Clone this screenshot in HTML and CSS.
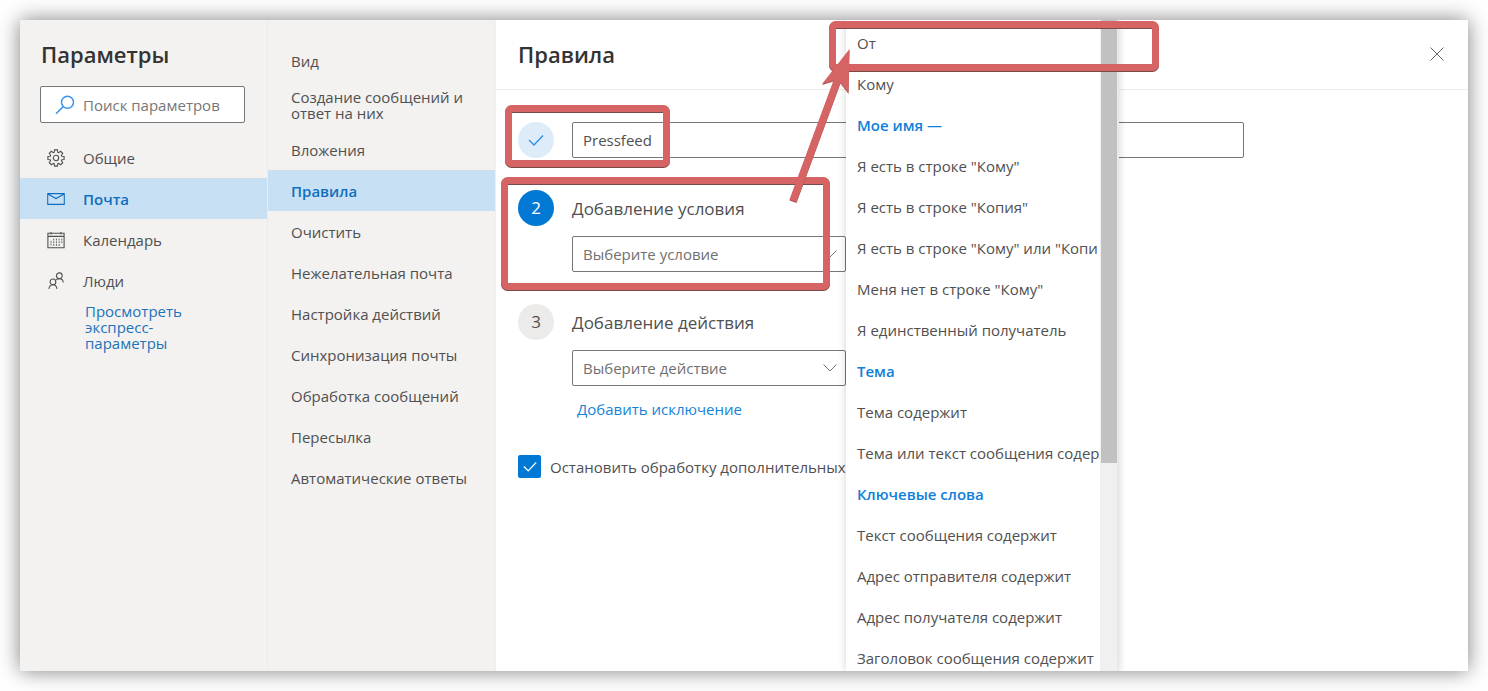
FILE: index.html
```html
<!DOCTYPE html>
<html lang="ru">
<head>
<meta charset="utf-8">
<title>Параметры — Правила</title>
<meta name="viewport" content="width=device-width, initial-scale=1">
<link rel="stylesheet" href="styles.css">
</head>
<body>
<div class="window">
  <aside class="sidebar">
    <h1 class="heading">Параметры</h1>
    <label class="search">
      <svg class="search-icon" viewBox="0 0 20 20" aria-hidden="true"><circle cx="12.5" cy="7.2" r="6"/><path d="M8.2 11.6 1 18.8"/></svg>
      <input class="search-input" type="text" placeholder="Поиск параметров" aria-label="Поиск параметров">
    </label>
    <nav class="sections">
      <a class="section" href="#general">
        <svg class="icon" viewBox="0 0 20 20" aria-hidden="true"><circle cx="10" cy="10" r="3"/><path d="M8.400 1h3.200l.4 2.600 1 .4 2.200-1.500 2.300 2.300L16 7l.4 1 2.600.4v3.200l-2.600.4-.4 1 1.500 2.200-2.300 2.300L13 16l-1 .4-.4 2.600H8.400L8 16.400 7 16l-2.200 1.500-2.300-2.300L4 13l-.4-1-2.600-.4V8.400L3.600 8 4 7 2.500 4.800l2.300-2.300L7 4l1-.4z"/></svg>
        Общие</a>
      <a class="section selected" href="#mail" aria-current="true">
        <svg class="icon" viewBox="0 0 20 20" aria-hidden="true"><path d="M.8 4h18.400v12H.8zM1 4.500l9 5L19 4.500"/></svg>
        Почта</a>
      <a class="section" href="#calendar">
        <svg class="icon" viewBox="0 0 20 20" aria-hidden="true"><path d="M1 2.500h18v16.200H1zM1 6h18M4.500 1v3M15.500 1v3"/><path class="fine" d="M4.500 11v6M7.500 8.500v8M10.500 8.500v8M13.500 8.500v8M16.500 8.500v5"/></svg>
        Календарь</a>
      <a class="section" href="#people">
        <svg class="icon" viewBox="0 0 20 20" aria-hidden="true"><circle cx="6.600" cy="11" r="3.200"/><path d="M2.200 18.800c.3-3 2-4.600 4.400-4.600s4.100 1.600 4.400 4.600"/><circle cx="13.700" cy="4.200" r="3.200"/><path d="M10.200 8.900c.8-1 2-1.500 3.500-1.500 2.400 0 4.100 1.600 4.400 4.200"/></svg>
        Люди</a>
    </nav>
    <a class="quick" href="#quick">Просмотреть экспресс-параметры</a>
  </aside>

  <nav class="pages">
    <a class="page" href="#view">Вид</a>
    <a class="page" href="#compose">Создание сообщений и ответ на них</a>
    <a class="page" href="#attachments">Вложения</a>
    <a class="page selected" href="#rules" aria-current="page">Правила</a>
    <a class="page" href="#sweep">Очистить</a>
    <a class="page" href="#junk">Нежелательная почта</a>
    <a class="page" href="#actions">Настройка действий</a>
    <a class="page" href="#sync">Синхронизация почты</a>
    <a class="page" href="#handling">Обработка сообщений</a>
    <a class="page" href="#forwarding">Пересылка</a>
    <a class="page" href="#replies">Автоматические ответы</a>
  </nav>

  <main class="main">
    <header class="main-header">
      <h2 class="heading">Правила</h2>
      <button class="close" type="button" aria-label="Закрыть">
        <svg class="close-icon" viewBox="0 0 14 14" aria-hidden="true"><path d="M.5.5l13 13M13.500.5l-13 13"/></svg>
      </button>
    </header>
    <form class="steps">
      <div class="step">
        <span class="badge done"><svg class="tick" viewBox="0 0 16 12" aria-hidden="true"><path d="M1 6l5 5 9-9.500"/></svg></span>
        <input class="field" type="text" value="Pressfeed" aria-label="Имя правила">
      </div>
      <div class="step">
        <span class="badge current">2</span>
        <div class="step-body">
          <label class="step-title" for="condition">Добавление условия</label>
          <div class="picker">
            <select class="field" id="condition"><option>Выберите условие</option></select>
            <svg class="chevron" viewBox="0 0 14 8" aria-hidden="true"><path d="M.5.5 7 7l6.500-6.500"/></svg>
          </div>
        </div>
      </div>
      <div class="step">
        <span class="badge">3</span>
        <div class="step-body">
          <label class="step-title" for="action">Добавление действия</label>
          <div class="picker">
            <select class="field" id="action"><option>Выберите действие</option></select>
            <svg class="chevron" viewBox="0 0 14 8" aria-hidden="true"><path d="M.5.5 7 7l6.500-6.500"/></svg>
          </div>
          <a class="exception" href="#exception">Добавить исключение</a>
        </div>
      </div>
      <label class="stop">
        <input class="stop-box" type="checkbox" checked>
        <svg class="stop-tick" viewBox="0 0 16 12" aria-hidden="true"><path d="M1 6l5 5 9-9.500"/></svg>
        <span>Остановить обработку дополнительных</span>
      </label>
    </form>

    <div class="menu">
      <div class="options" role="listbox" aria-label="Условия">
        <div class="option" role="option">От</div>
        <div class="option" role="option">Кому</div>
        <div class="option group" role="presentation">Мое имя —</div>
        <div class="option" role="option">Я есть в строке "Кому"</div>
        <div class="option" role="option">Я есть в строке "Копия"</div>
        <div class="option" role="option">Я есть в строке "Кому" или "Копи</div>
        <div class="option" role="option">Меня нет в строке "Кому"</div>
        <div class="option" role="option">Я единственный получатель</div>
        <div class="option group" role="presentation">Тема</div>
        <div class="option" role="option">Тема содержит</div>
        <div class="option" role="option">Тема или текст сообщения содерж</div>
        <div class="option group" role="presentation">Ключевые слова</div>
        <div class="option" role="option">Текст сообщения содержит</div>
        <div class="option" role="option">Адрес отправителя содержит</div>
        <div class="option" role="option">Адрес получателя содержит</div>
        <div class="option" role="option">Заголовок сообщения содержит</div>
      </div>
      <div class="track"><div class="thumb"></div></div>
    </div>
  </main>

  <svg class="marks" width="700" height="300" viewBox="480 20 700 300" aria-hidden="true">
    <g class="mark-box">
      <rect x="508.500" y="108.500" width="158" height="55" rx="3"/>
      <rect x="504.500" y="180.500" width="322" height="106" rx="3"/>
      <rect x="832.500" y="24.500" width="323" height="43" rx="3"/>
    </g>
    <path class="mark-arrow" d="M849.500 49 848.500 93 840.500 82.500 796.500 202 789.500 199.500 833.500 80.500 822 84z"/>
  </svg>
</div>
</body>
</html>
```
FILE: styles.css
```css
* { box-sizing: border-box; }

body {
  margin: 0;
  padding: 20px;
  min-height: 100vh;
  display: flex;
  background: #fff;
  color: #505050;
  font: 15px/20px "Open Sans", "Noto Sans", sans-serif;
}

a { text-decoration: none; color: inherit; }
svg { fill: none; stroke: currentColor; flex: none; }
input, select, button { font: inherit; color: inherit; }

.window {
  position: relative;
  flex: 1;
  min-width: 0;
  display: grid;
  grid-template-columns: 248px 228px minmax(0, 1fr);
  background: #fff;
  box-shadow: 0 0 20px rgba(0, 0, 0, .5);
}

.heading {
  margin: 0;
  font-size: 22px;
  line-height: 30px;
  font-weight: 600;
  color: #333;
}

.sidebar {
  background: #f3f2f1;
  border-right: 1px solid #eceaea;
  padding-top: 19px;
}
.sidebar .heading { padding-left: 21px; }

.search {
  display: flex;
  align-items: center;
  gap: 8px;
  height: 37px;
  margin: 17px 22px 14px 20px;
  padding: 0 8px 0 14px;
  border: 1px solid #777;
  border-radius: 2px;
  background: #fff;
}
.search-icon { width: 20px; height: 20px; color: #3a96e8; stroke-width: 1.5; }
.search-input {
  width: 100%;
  min-width: 0;
  padding: 0;
  border: 0;
  outline: 0;
  background: none;
}
.search-input::placeholder { color: #777; opacity: 1; }

.sections { display: flex; flex-direction: column; }
.section {
  display: flex;
  align-items: center;
  gap: 18px;
  height: 41px;
  padding-left: 27px;
}
.icon { width: 18px; height: 18px; stroke-width: 1.2; }
.fine { stroke-width: 1; stroke-dasharray: 2 1; }
.quick {
  display: block;
  width: 120px;
  margin: 2px 0 0 65px;
  line-height: 16px;
  color: #2272b9;
}

.pages {
  display: flex;
  flex-direction: column;
  padding-top: 20px;
  background: #f3f2f1;
  border-right: 1px solid #f0eeee;
}
.page {
  display: flex;
  align-items: center;
  min-height: 41px;
  padding: 8px 16px 8px 23px;
  line-height: 16px;
}
.selected { background: #c7e0f4; color: #106ebe; font-weight: 600; }

.main { position: relative; }
.main-header {
  display: flex;
  align-items: center;
  justify-content: space-between;
  height: 70px;
  padding: 0 24px 2px 22px;
  border-bottom: 1px solid #eee;
}
.close { display: flex; padding: 0; border: 0; background: none; }
.close-icon { width: 14px; height: 14px; color: #666; }

.steps {
  display: flex;
  flex-direction: column;
  gap: 32px;
  padding: 32px 22px;
}
.step { display: flex; gap: 18px; }
.badge {
  display: flex;
  align-items: center;
  justify-content: center;
  flex: none;
  width: 36px;
  height: 36px;
  border-radius: 50%;
  background: #edebe9;
  font-size: 17px;
}
.badge.done { background: #deecf9; color: #2b8fe6; }
.badge.current { background: #0078d4; color: #fff; }
.tick { width: 16px; height: 12px; stroke-width: 1.3; }

.field {
  width: 100%;
  max-width: 672px;
  height: 36px;
  padding: 0 10px;
  border: 1px solid #777;
  border-radius: 2px;
  background: #fff;
  appearance: none;
}
.step-body { display: flex; flex-direction: column; width: 274px; }
.step-title { height: 46px; line-height: 38px; font-size: 17px; }
.picker { display: grid; align-items: center; }
.picker > * { grid-area: 1 / 1; }
.picker .field { color: #707070; }
.chevron {
  width: 14px;
  height: 8px;
  justify-self: end;
  margin-right: 9px;
  color: #777;
  pointer-events: none;
}
.exception { margin: 13px 0 4px 5px; color: #1683d8; }

.stop { display: grid; grid-template-columns: 23px 1fr; gap: 9px; align-items: center; white-space: nowrap; }
.stop-box {
  grid-area: 1 / 1;
  width: 23px;
  height: 23px;
  margin: 0;
  appearance: none;
  border-radius: 2px;
  background: #0078d4;
}
.stop-tick { grid-area: 1 / 1; justify-self: center; width: 14px; height: 11px; color: #fff; stroke-width: 1.5; }

.menu {
  position: absolute;
  top: 0;
  bottom: 0;
  left: 350px;
  width: 273px;
  display: flex;
  overflow: hidden;
  background: #fff;
  border-right: 2px solid #e8e8e8;
  box-shadow: 0 0 8px rgba(0, 0, 0, .18);
  clip-path: inset(0 -8px 0 -8px);
}
.options { flex: 1; min-width: 0; overflow: hidden; padding-top: 3px; }
.option { height: 41px; padding-left: 11px; line-height: 41px; white-space: nowrap; }
.group { color: #0f80d9; font-weight: 600; }
.track { width: 17px; background: #f0f0f0; }
.thumb { height: 68%; margin-left: 1px; background: #c1c1c1; }

.marks { position: absolute; top: 0; left: 460px; pointer-events: none; }
.mark-box { stroke: #d66464; stroke-width: 7; filter: drop-shadow(0 1px 0 #7a4a4a); }
.mark-arrow { fill: #d66464; stroke: none; filter: drop-shadow(0 1px 0 #a05050); }
```
